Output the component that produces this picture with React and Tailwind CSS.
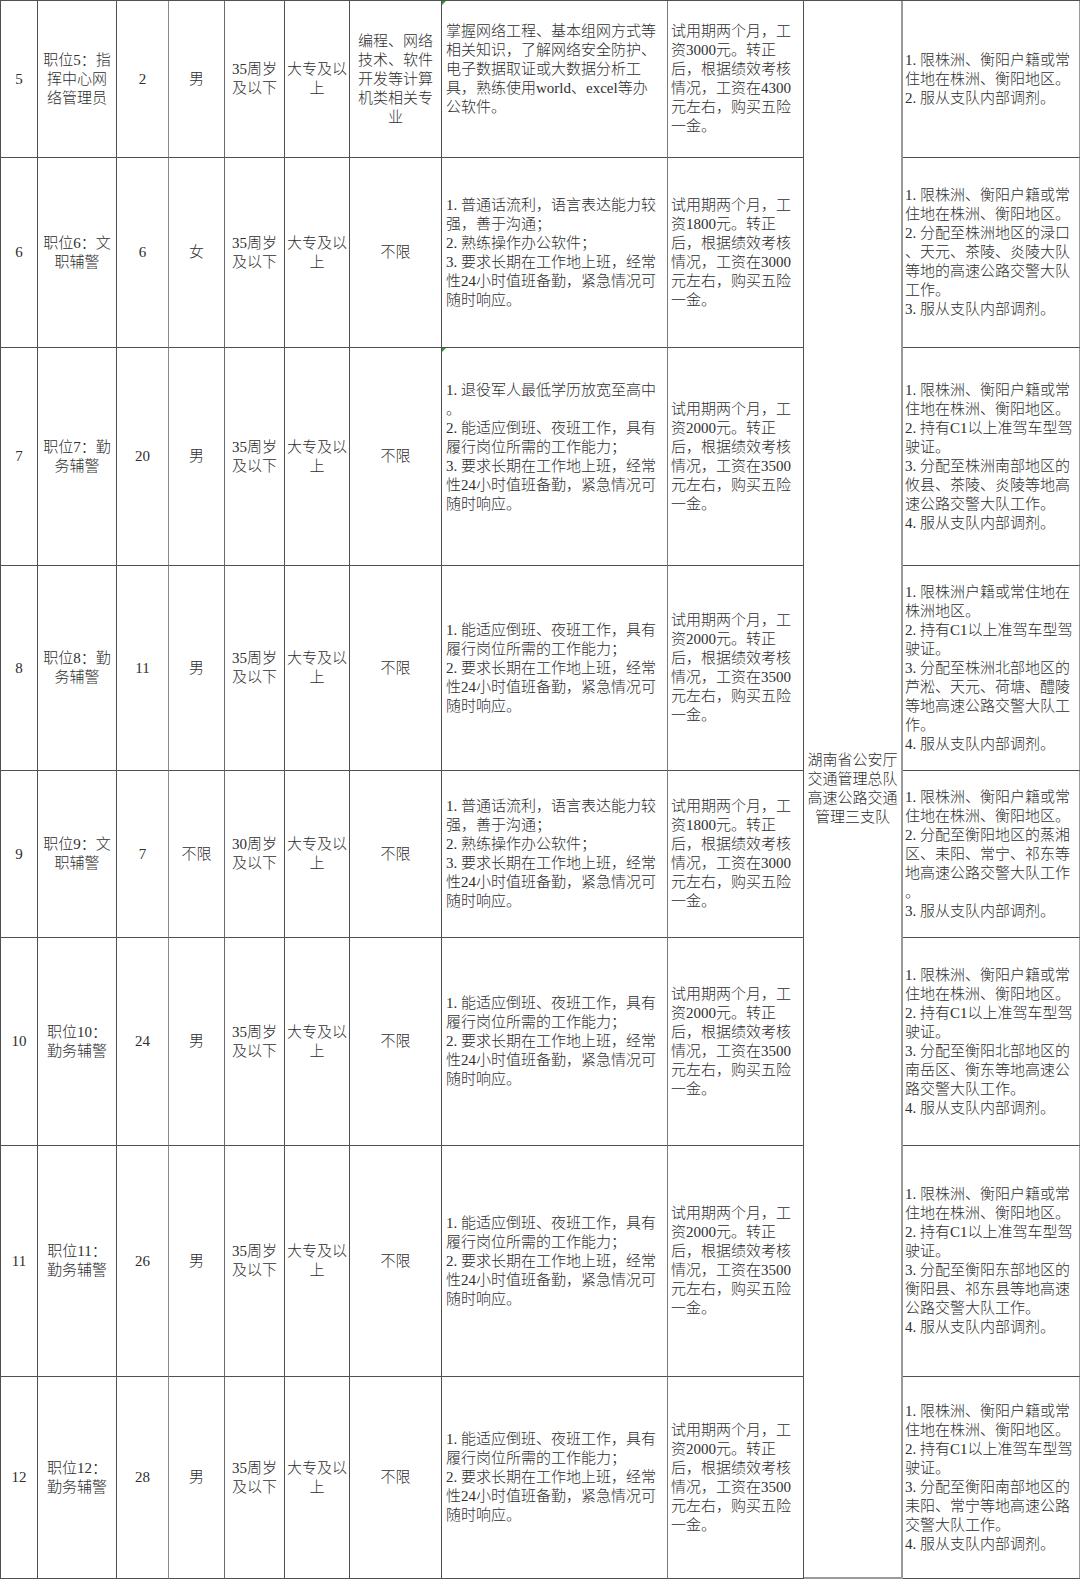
import React from "react";

const PAY = (a, b) => [
  "试用期两个月，工",
  `资${a}元。转正`,
  "后，根据绩效考核",
  `情况，工资在${b}`,
  "元左右，购买五险",
  "一金。",
];

const REQ_A = [
  "1.普通话流利，语言表达能力较",
  "强，善于沟通；",
  "2.熟练操作办公软件；",
  "3.要求长期在工作地上班，经常",
  "性24小时值班备勤，紧急情况可",
  "随时响应。",
];

const REQ_B = [
  "1.能适应倒班、夜班工作，具有",
  "履行岗位所需的工作能力；",
  "2.要求长期在工作地上班，经常",
  "性24小时值班备勤，紧急情况可",
  "随时响应。",
];

const rows = [
  {
    no: "5",
    pos: ["职位5：指", "挥中心网", "络管理员"],
    n: "2",
    sex: "男",
    age: "35",
    major: ["编程、网络", "技术、软件", "开发等计算", "机类相关专", "业"],
    req: [
      "掌握网络工程、基本组网方式等",
      "相关知识，了解网络安全防护、",
      "电子数据取证或大数据分析工",
      "具，熟练使用world、excel等办",
      "公软件。",
      "",
    ],
    mark: true,
    pay: PAY("3000", "4300"),
    other: ["1.限株洲、衡阳户籍或常", "住地在株洲、衡阳地区。", "2.服从支队内部调剂。"],
  },
  {
    no: "6",
    pos: ["职位6：文", "职辅警"],
    n: "6",
    sex: "女",
    age: "35",
    major: ["不限"],
    req: REQ_A,
    pay: PAY("1800", "3000"),
    other: [
      "1.限株洲、衡阳户籍或常",
      "住地在株洲、衡阳地区。",
      "2.分配至株洲地区的渌口",
      "、天元、茶陵、炎陵大队",
      "等地的高速公路交警大队",
      "工作。",
      "3.服从支队内部调剂。",
    ],
  },
  {
    no: "7",
    pos: ["职位7：勤", "务辅警"],
    n: "20",
    sex: "男",
    age: "35",
    major: ["不限"],
    req: [
      "1.退役军人最低学历放宽至高中",
      "。",
      "2.能适应倒班、夜班工作，具有",
      "履行岗位所需的工作能力；",
      "3.要求长期在工作地上班，经常",
      "性24小时值班备勤，紧急情况可",
      "随时响应。",
      "",
    ],
    mark: true,
    pay: PAY("2000", "3500"),
    other: [
      "1.限株洲、衡阳户籍或常",
      "住地在株洲、衡阳地区。",
      "2.持有C1以上准驾车型驾",
      "驶证。",
      "3.分配至株洲南部地区的",
      "攸县、茶陵、炎陵等地高",
      "速公路交警大队工作。",
      "4.服从支队内部调剂。",
    ],
  },
  {
    no: "8",
    pos: ["职位8：勤", "务辅警"],
    n: "11",
    sex: "男",
    age: "35",
    major: ["不限"],
    req: REQ_B,
    pay: PAY("2000", "3500"),
    other: [
      "1.限株洲户籍或常住地在",
      "株洲地区。",
      "2.持有C1以上准驾车型驾",
      "驶证。",
      "3.分配至株洲北部地区的",
      "芦淞、天元、荷塘、醴陵",
      "等地高速公路交警大队工",
      "作。",
      "4.服从支队内部调剂。",
    ],
  },
  {
    no: "9",
    pos: ["职位9：文", "职辅警"],
    n: "7",
    sex: "不限",
    age: "30",
    major: ["不限"],
    req: REQ_A,
    pay: PAY("1800", "3000"),
    other: [
      "1.限株洲、衡阳户籍或常",
      "住地在株洲、衡阳地区。",
      "2.分配至衡阳地区的蒸湘",
      "区、耒阳、常宁、祁东等",
      "地高速公路交警大队工作",
      "。",
      "3.服从支队内部调剂。",
    ],
  },
  {
    no: "10",
    pos: ["职位10：", "勤务辅警"],
    n: "24",
    sex: "男",
    age: "35",
    major: ["不限"],
    req: REQ_B,
    pay: PAY("2000", "3500"),
    other: [
      "1.限株洲、衡阳户籍或常",
      "住地在株洲、衡阳地区。",
      "2.持有C1以上准驾车型驾",
      "驶证。",
      "3.分配至衡阳北部地区的",
      "南岳区、衡东等地高速公",
      "路交警大队工作。",
      "4.服从支队内部调剂。",
    ],
  },
  {
    no: "11",
    pos: ["职位11：", "勤务辅警"],
    n: "26",
    sex: "男",
    age: "35",
    major: ["不限"],
    req: REQ_B,
    pay: PAY("2000", "3500"),
    other: [
      "1.限株洲、衡阳户籍或常",
      "住地在株洲、衡阳地区。",
      "2.持有C1以上准驾车型驾",
      "驶证。",
      "3.分配至衡阳东部地区的",
      "衡阳县、祁东县等地高速",
      "公路交警大队工作。",
      "4.服从支队内部调剂。",
    ],
  },
  {
    no: "12",
    pos: ["职位12：", "勤务辅警"],
    n: "28",
    sex: "男",
    age: "35",
    major: ["不限"],
    req: REQ_B,
    pay: PAY("2000", "3500"),
    other: [
      "1.限株洲、衡阳户籍或常",
      "住地在株洲、衡阳地区。",
      "2.持有C1以上准驾车型驾",
      "驶证。",
      "3.分配至衡阳南部地区的",
      "耒阳、常宁等地高速公路",
      "交警大队工作。",
      "4.服从支队内部调剂。",
    ],
  },
];

function Line({ text }) {
  const m = text.match(/^(\d)\.(.*)$/);
  if (m) {
    return (
      <>
        {m[1]}
        <span className="inline-block w-[7.5px]">.</span>
        {m[2]}
      </>
    );
  }
  return text === "" ? "\u00a0" : text;
}

function Lines({ lines }) {
  return lines.map((l, i) => (
    <div key={i} className="whitespace-nowrap h-[19px] leading-[19px]">
      <Line text={l} />
    </div>
  ));
}

function Center({ lines, border }) {
  return (
    <div
      className={`flex flex-col items-center justify-center text-center border-b border-r border-b-[#505050] ${border}`}
    >
      <Lines lines={lines} />
    </div>
  );
}

function Left({ lines, border, pad, mark }) {
  return (
    <div
      className={`relative flex flex-col items-start justify-center border-b border-r border-b-[#505050] ${border} ${pad}`}
    >
      {mark && (
        <span className="absolute left-0 top-0 w-0 h-0 border-t-[4px] border-r-[4px] border-t-[#2e9a2e] border-r-transparent" />
      )}
      <Lines lines={lines} />
    </div>
  );
}

export default function App() {
  return (
    <div className="w-[1080px] h-[1580px] bg-white overflow-hidden">
      <div
        className="grid grid-cols-[37px_79px_52px_56px_60px_65px_92px_226px_136px_99px_178px] grid-rows-[157px_190px_218px_205px_167px_208px_231px_202px] w-[1080px] border-t border-l border-t-[#505050] border-l-[#505050] text-[15px] font-light text-[#2e2e2e]"
        style={{ fontFamily: '"Liberation Serif", "Noto Sans CJK SC", serif' }}
      >
        {rows.map((r, i) => (
          <React.Fragment key={r.no}>
            <Center lines={[r.no]} border="border-r-[#505050]" />
            <Center lines={r.pos} border="border-r-[#505050]" />
            <Center lines={[r.n]} border="border-r-[#8a8a8a]" />
            <Center lines={[r.sex]} border="border-r-[#6a6a6a]" />
            <Center lines={[`${r.age}周岁`, "及以下"]} border="border-r-[#505050]" />
            <Center lines={["大专及以", "上"]} border="border-r-[#505050]" />
            <Center lines={r.major} border="border-r-[#505050]" />
            <Left lines={r.req} border="border-r-[#7a7a7a]" pad="pl-[4px]" mark={r.mark} />
            <Left lines={r.pay} border="border-r-[#505050]" pad="pl-[3px]" />
            {i === 0 && (
              <div className="row-span-8 flex flex-col items-center justify-center text-center border-b-2 border-r-2 border-b-[#9a9a9a] border-r-[#9a9a9a]">
                <Lines
                  lines={["湖南省公安厅", "交通管理总队", "高速公路交通", "管理三支队"]}
                />
              </div>
            )}
            <Left lines={r.other} border="border-r-2 border-r-[#9a9a9a]" pad="pl-[2px]" />
          </React.Fragment>
        ))}
      </div>
    </div>
  );
}
